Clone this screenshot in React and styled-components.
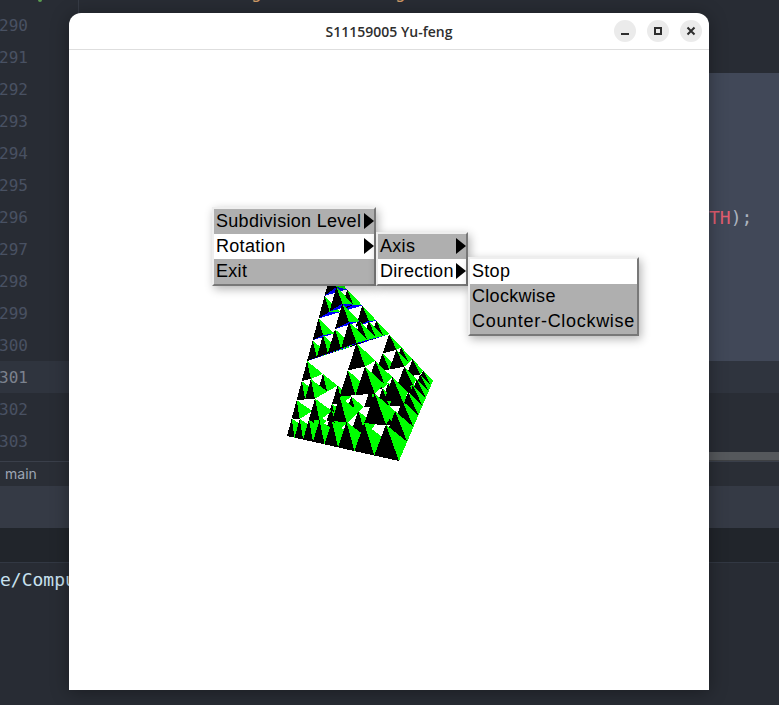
import styled, { createGlobalStyle } from "styled-components";

const Global = createGlobalStyle`
  html, body { margin: 0; padding: 0; background: #282c34; }
  body { width: 779px; height: 705px; overflow: hidden; }
`;

const Desktop = styled.div`
  position: relative;
  width: 779px;
  height: 705px;
  overflow: hidden;
  display: flex;
  flex-direction: column;
  background: #282c34;
  font-family: "Liberation Sans", Arial, sans-serif;
`;

const EditorArea = styled.div`
  height: 461px;
  flex: none;
  display: flex;
`;

const Gutter = styled.div`
  position: relative;
  width: 79px;
  flex: none;
  padding-top: 9px;
  box-sizing: border-box;
  border-right: 1px solid #363b45;
  font-family: "DejaVu Sans Mono", monospace;
  font-size: 16px;
  line-height: 34px;
`;

const LineNo = styled.div`
  height: 32px;
  text-indent: -1px;
  color: ${(p) => (p.$active ? "#7c828e" : "#495162")};
  background: ${(p) => (p.$active ? "#2f343e" : "transparent")};
`;

const GitDot = styled.div`
  position: absolute;
  left: 38px;
  top: -2px;
  width: 4px;
  height: 4px;
  border-radius: 50%;
  background: #5a9c50;
`;

const CodePane = styled.div`
  flex: 1;
  display: flex;
  flex-direction: column;
  position: relative;
`;

const Band = styled.div`
  height: ${(p) => p.$h}px;
  flex: none;
  background: ${(p) => p.$bg};
`;

const ScrollBar = styled.div`
  height: 8px;
  flex: none;
  background: #55585c;
  border-bottom: 1px solid #3e4043;
`;

const TopGlyph = styled.span`
  position: absolute;
  left: ${(p) => p.$x}px;
  top: -20px;
  font-family: "DejaVu Sans Mono", monospace;
  font-size: 18px;
  line-height: 24px;
  color: ${(p) => p.$c};
`;

const CodeTail = styled.div`
  position: absolute;
  left: 630px;
  top: 206px;
  font-family: "DejaVu Sans Mono", monospace;
  font-size: 18px;
  line-height: 24px;
  color: #abb2bf;
  white-space: nowrap;
  span { color: #e05d70; }
`;

const StatusBar = styled.div`
  height: 25px;
  flex: none;
  box-sizing: border-box;
  background: #2a2e36;
  border-top: 1px solid #3a3f4a;
  padding-left: 5px;
  font-family: "Inter", sans-serif;
  font-size: 14px;
  line-height: 24px;
  color: #9da5b4;
`;

const PanelHeader = styled.div`
  height: 42px;
  flex: none;
  background: #353a45;
`;

const TabStrip = styled.div`
  height: 34px;
  flex: none;
  background: #21252b;
`;

const Terminal = styled.div`
  flex: 1;
  border-top: 1px solid #323843;
  padding-top: 5px;
  font-family: "DejaVu Sans Mono", monospace;
  font-size: 18px;
  line-height: 24px;
  color: #c8e1ef;
  white-space: nowrap;
`;

// the GL window floats over the editor
const Window = styled.div`
  position: absolute;
  left: 69px;
  top: 13px;
  width: 640px;
  height: 677px;
  background: #fff;
  border-radius: 12px 12px 0 0;
  box-shadow: 0 2px 18px rgba(0, 0, 0, 0.35);
  display: flex;
  flex-direction: column;
`;

const TitleBar = styled.div`
  height: 36px;
  flex: none;
  border-bottom: 1px solid #dedede;
  display: flex;
  align-items: center;
  justify-content: center;
  position: relative;
  font-family: "Open Sans", "Noto Sans", sans-serif;
  font-weight: 600;
  font-size: 14px;
  color: #2e2e2e;
`;

const WinButtons = styled.div`
  position: absolute;
  right: 7px;
  top: 7px;
  display: flex;
  gap: 11px;
`;

const WinButton = styled.div`
  width: 22px;
  height: 22px;
  border-radius: 50%;
  background: #ebebeb;
  display: flex;
  align-items: center;
  justify-content: center;
`;

const Canvas = styled.div`
  flex: 1;
  position: relative;
`;

const Fractal = styled.svg`
  display: block;
`;

const Menu = styled.div`
  position: absolute;
  left: ${(p) => p.$x}px;
  top: ${(p) => p.$y}px;
  width: ${(p) => p.$w}px;
  background: #afafaf;
  border-style: solid;
  border-width: 2px;
  border-color: #eeeeee #787878 #787878 #eeeeee;
  box-shadow: 2px 3px 9px rgba(0, 0, 0, 0.3);
`;

const Item = styled.div`
  height: 25px;
  position: relative;
  background: ${(p) => (p.$on ? "#ffffff" : "#afafaf")};
  color: #000;
  font-family: "Liberation Sans", Arial, sans-serif;
  font-size: 18px;
  letter-spacing: ${(p) => p.$track || 0.3}px;
  line-height: 25px;
  padding-left: 2px;
  white-space: nowrap;
`;

const Arrow = styled.div`
  position: absolute;
  right: 0;
  top: 4px;
  width: 0;
  height: 0;
  border-style: solid;
  border-width: 8px 0 8px 10px;
  border-color: transparent transparent transparent #000;
`;

// corners of the tetrahedron in page coords, w is the depth from the camera
const A = { x: 331, y: 272, w: 1 };
const L = { x: 287, y: 436, w: 1.19 };
const B = { x: 399, y: 461, w: 0.6 };
const R = { x: 433, y: 381, w: 1.33 };

// midpoint in 3D, so the pieces shrink with perspective
const mid = (p, q) => {
  const w = p.w + q.w;
  return {
    x: (p.x * p.w + q.x * q.w) / w,
    y: (p.y * p.w + q.y * q.w) / w,
    w: w / 2,
  };
};

const area = (p, q, r) => (q.x - p.x) * (r.y - p.y) - (r.x - p.x) * (q.y - p.y);

const collect = (a, l, b, r, depth, out) => {
  if (depth === 0) {
    out.push([a, l, b, r]);
    return out;
  }
  const al = mid(a, l);
  const ab = mid(a, b);
  const ar = mid(a, r);
  const lb = mid(l, b);
  const lr = mid(l, r);
  const br = mid(b, r);
  collect(a, al, ab, ar, depth - 1, out);
  collect(ar, lr, br, r, depth - 1, out);
  collect(al, l, lb, lr, depth - 1, out);
  collect(ab, lb, b, br, depth - 1, out);
  return out;
};

const toPoints = (list) => list.map((p) => `${p.x},${p.y}`).join(" ");

const buildFaces = () => {
  const blackSign = Math.sign(area(A, L, B));
  const greenSign = Math.sign(area(A, B, R));
  const baseSign = -Math.sign(area(L, B, R));
  const parts = collect(A, L, B, R, 3, []);
  const depth = (t) => t.reduce((s, p) => s + p.w, 0) / 4;
  parts.sort((p, q) => depth(q) - depth(p));
  const faces = [];
  parts.forEach(([a, l, b, r]) => {
    if (Math.sign(area(l, b, r)) === baseSign) faces.push({ c: "#0000ff", p: [l, b, r] });
    if (Math.sign(area(a, l, b)) === blackSign) faces.push({ c: "#000000", p: [a, l, b] });
    if (Math.sign(area(a, b, r)) === greenSign) faces.push({ c: "#00ff00", p: [a, b, r] });
  });
  return faces;
};

const faces = buildFaces();
const lines = [290, 291, 292, 293, 294, 295, 296, 297, 298, 299, 300, 301, 302, 303];

export default function App() {
  return (
    <Desktop>
      <Global />
      <EditorArea>
        <Gutter>
          <GitDot />
          {lines.map((n) => (
            <LineNo key={n} $active={n === 301}>{n}</LineNo>
          ))}
        </Gutter>
        <CodePane>
          <TopGlyph $x={96} $c="#abb2bf">(</TopGlyph>
          <TopGlyph $x={172} $c="#d19a66">g</TopGlyph>
          <TopGlyph $x={192} $c="#61afef">/</TopGlyph>
          <TopGlyph $x={316} $c="#d19a66">g</TopGlyph>
          <TopGlyph $x={336} $c="#abb2bf">)</TopGlyph>
          <TopGlyph $x={360} $c="#abb2bf">(</TopGlyph>
          <Band $h={73} $bg="#282c34" />
          <Band $h={288} $bg="#414858" />
          <Band $h={32} $bg="#2f343e" />
          <Band $h={59} $bg="#292d35" />
          <ScrollBar />
          <CodeTail><span>TH</span>);</CodeTail>
        </CodePane>
      </EditorArea>
      <StatusBar>main</StatusBar>
      <PanelHeader />
      <TabStrip />
      <Terminal>e/Compu</Terminal>
      <Window>
        <TitleBar>
          S11159005 Yu-feng
          <WinButtons>
            <WinButton>
              <svg width="10" height="10" viewBox="0 0 10 10"><rect x="1" y="7" width="8" height="2" fill="#2e2e2e" /></svg>
            </WinButton>
            <WinButton>
              <svg width="10" height="10" viewBox="0 0 10 10"><rect x="2" y="2" width="6" height="6" fill="none" stroke="#2e2e2e" strokeWidth="2" /></svg>
            </WinButton>
            <WinButton>
              <svg width="10" height="10" viewBox="0 0 10 10"><path d="M1.5 1.5 8.5 8.5M8.5 1.5 1.5 8.5" stroke="#2e2e2e" strokeWidth="2" /></svg>
            </WinButton>
          </WinButtons>
        </TitleBar>
        <Canvas>
          <Fractal width="640" height="640" viewBox="69 50 640 640" shapeRendering="crispEdges">
            {faces.map((f, i) => (
              <polygon key={i} points={toPoints(f.p)} fill={f.c} />
            ))}
          </Fractal>
          <Menu $x={143} $y={157} $w={160}>
            <Item>Subdivision Level<Arrow /></Item>
            <Item $on>Rotation<Arrow /></Item>
            <Item>Exit</Item>
          </Menu>
          <Menu $x={307} $y={182} $w={88}>
            <Item>Axis<Arrow /></Item>
            <Item $on>Direction<Arrow /></Item>
          </Menu>
          <Menu $x={399} $y={207} $w={167}>
            <Item $on>Stop</Item>
            <Item>Clockwise</Item>
            <Item $track={0.7}>Counter-Clockwise</Item>
          </Menu>
        </Canvas>
      </Window>
    </Desktop>
  );
}
